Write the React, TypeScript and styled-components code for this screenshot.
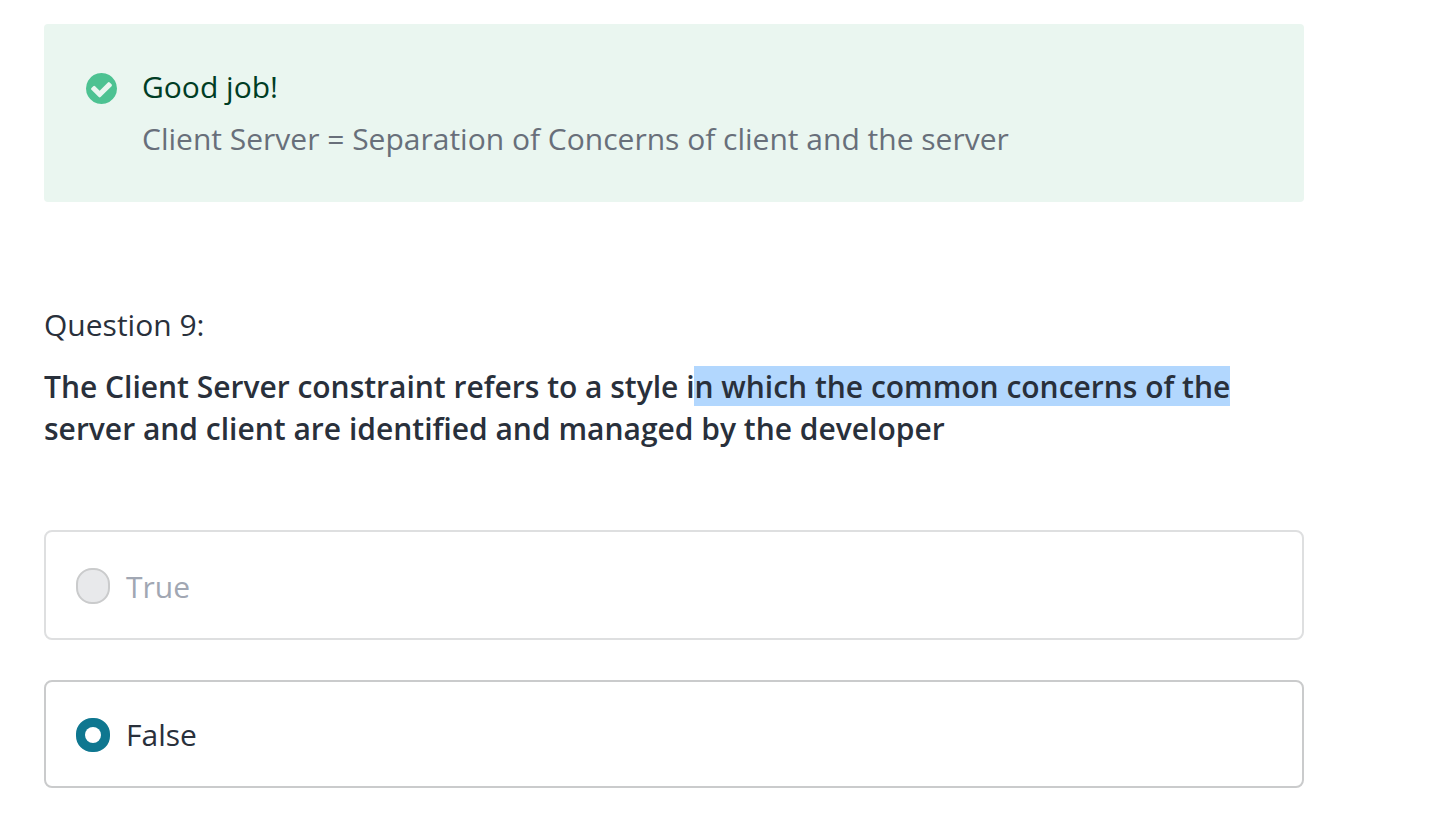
import React from "react";
import styled, { createGlobalStyle } from "styled-components";

const GlobalStyle = createGlobalStyle`
  body {
    margin: 0;
    background: #ffffff;
    color: #29303b;
    font-family: "Open Sans", "Noto Sans", sans-serif;
    font-size: 30px;
    line-height: 42px;
  }
`;

const Page = styled.main`
  box-sizing: border-box;
  width: 1304px;
  height: 820px;
  padding: 24px 0 0 44px;
  overflow: hidden;
`;

const Feedback = styled.section`
  box-sizing: border-box;
  display: flex;
  align-items: flex-start;
  gap: 25px;
  height: 178px;
  padding: 42px 42px 0;
  border-radius: 4px;
  background: #eaf6f0;
`;

const CheckIcon = styled.svg`
  flex: none;
  width: 31px;
  height: 31px;
  margin-top: 7px;
  fill: #4dc292;
`;

const FeedbackText = styled.div`
  display: flex;
  flex-direction: column;
  gap: 10px;
`;

const FeedbackTitle = styled.div`
  color: #003d25;
`;

const FeedbackNote = styled.div`
  color: #686f7a;
`;

const QuestionLabel = styled.div`
  margin-top: 102px;
`;

const QuestionText = styled.h2`
  margin: 20px 0 0;
  font-size: 30px;
  font-weight: 600;
`;

const FirstLine = styled.span`
  letter-spacing: -0.01px;
`;

const Highlight = styled.span`
  margin-left: -0.6px;
  padding-left: 0.6px;
  background: linear-gradient(#b2d7fe, #b2d7fe) 0 0 / 100% 40px no-repeat;
`;

const Options = styled.div`
  display: flex;
  flex-direction: column;
  gap: 40px;
  margin-top: 80px;
`;

const Option = styled.label<{ $selected?: boolean }>`
  box-sizing: border-box;
  display: flex;
  align-items: flex-start;
  gap: 16px;
  height: ${(p) => (p.$selected ? 108 : 110)}px;
  padding: ${(p) => (p.$selected ? "32px" : "34px")} 30px 0;
  border: 2px solid ${(p) => (p.$selected ? "#cacbcc" : "#dedfe0")};
  border-radius: 8px;
  color: ${(p) => (p.$selected ? "#29303b" : "#a1a7b3")};
`;

const Radio = styled.span<{ $selected?: boolean }>`
  box-sizing: border-box;
  display: flex;
  align-items: center;
  justify-content: center;
  flex: none;
  width: 34px;
  height: ${(p) => (p.$selected ? 34 : 36)}px;
  margin-top: ${(p) => (p.$selected ? 4 : 2)}px;
  border: 2px solid ${(p) => (p.$selected ? "#0f7790" : "#cacbcc")};
  border-radius: 16px;
  background: ${(p) => (p.$selected ? "#0f7790" : "#e8e9eb")};
`;

const RadioDot = styled.span`
  width: 16px;
  height: 16px;
  border-radius: 50%;
  background: #ffffff;
`;

export default function App() {
  return (
    <>
      <GlobalStyle />
      <Page>
        <Feedback>
          <CheckIcon viewBox="0 0 1536 1536" aria-hidden="true">
            <path d="M1284 606q0-28-18-46l-91-90q-19-19-45-19t-45 19l-408 407-226-226q-19-19-45-19t-45 19l-91 90q-18 18-18 46 0 27 18 45l362 362q19 19 45 19 27 0 46-19l543-543q18-18 18-45zM1536 768q0 209-103 385.500t-279.500 279.500-385.500 103-385.500-103-279.500-279.500-103-385.500 103-385.500 279.500-279.500 385.500-103 385.500 103 279.500 279.500 103 385.500z" fillRule="evenodd" />
          </CheckIcon>
          <FeedbackText>
            <FeedbackTitle>Good job!</FeedbackTitle>
            <FeedbackNote>
              Client Server = Separation of Concerns of client and the server
            </FeedbackNote>
          </FeedbackText>
        </Feedback>
        <QuestionLabel>Question 9:</QuestionLabel>
        <QuestionText>
          <FirstLine>
            The Client Server constraint refers to a style i
            <Highlight>n which the common concerns of the</Highlight>
          </FirstLine>
          <br />
          server and client are identified and managed by the developer
        </QuestionText>
        <Options>
          <Option>
            <Radio />
            <span>True</span>
          </Option>
          <Option $selected>
            <Radio $selected>
              <RadioDot />
            </Radio>
            <span>False</span>
          </Option>
        </Options>
      </Page>
    </>
  );
}
